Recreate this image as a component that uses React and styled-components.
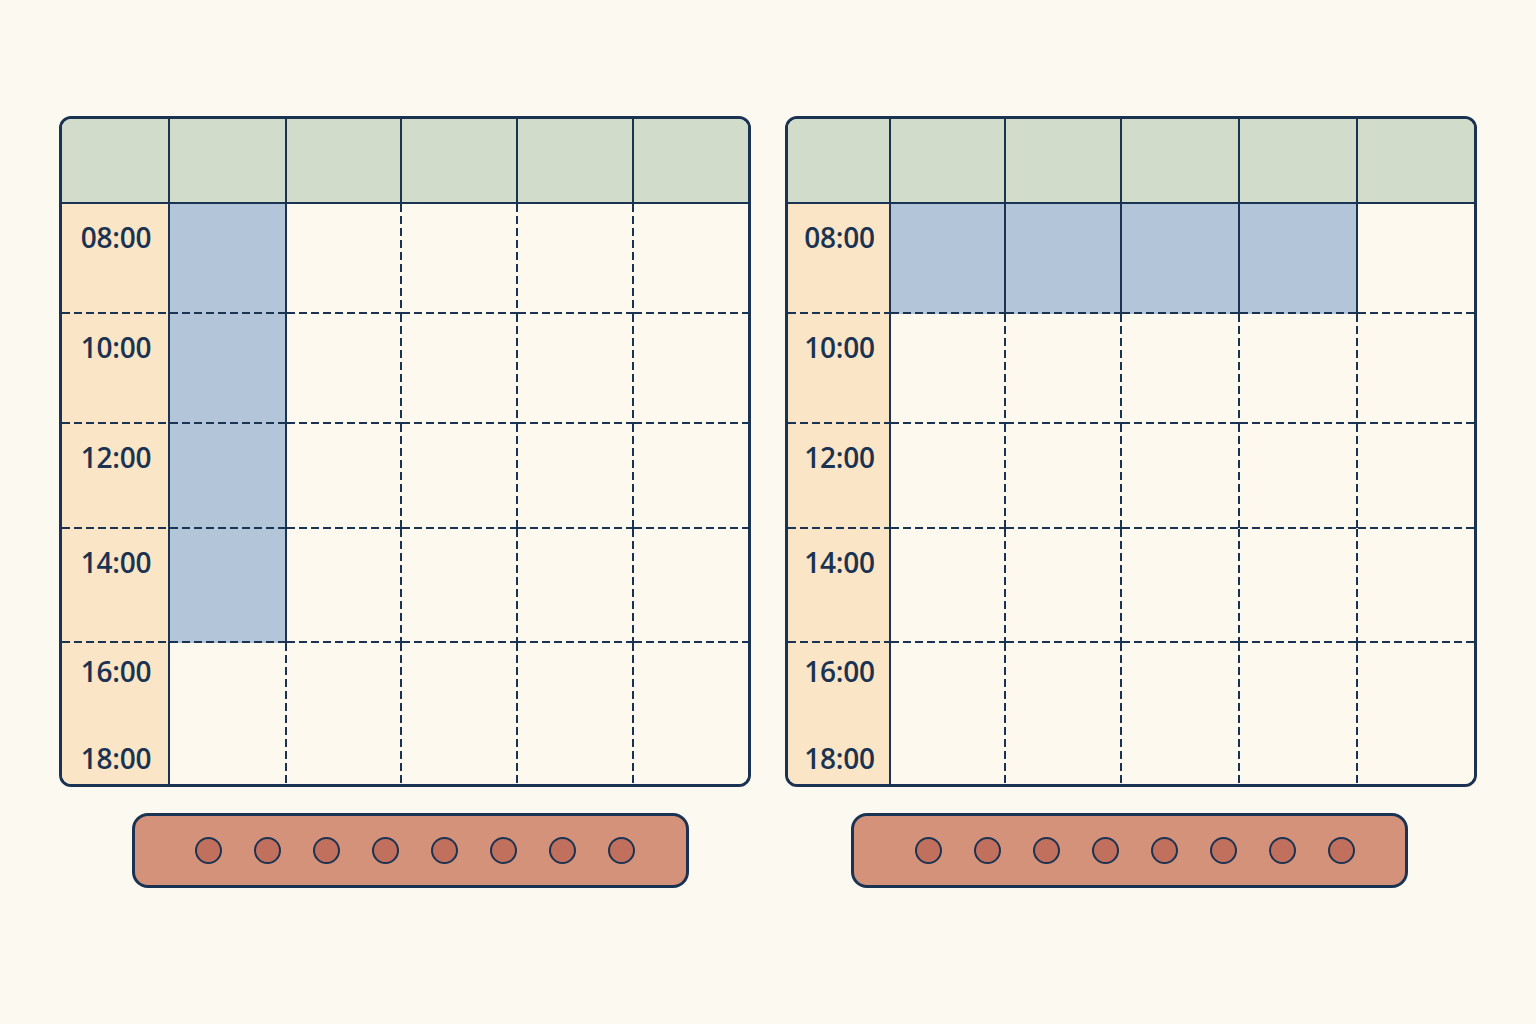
import React from "react";
import styled, { createGlobalStyle } from "styled-components";

const ink = "#1b3352";

const GlobalStyle = createGlobalStyle`
  html, body {
    margin: 0;
    padding: 0;
    background: #fcf9f1;
    font-family: "Open Sans", "Liberation Sans", sans-serif;
  }
`;

const Page = styled.div`
  display: flex;
  justify-content: center;
  align-items: flex-start;
  gap: 34px;
  padding-top: 116px;
  min-height: 1024px;
  box-sizing: border-box;
`;

const Panel = styled.div`
  display: flex;
  flex-direction: column;
  align-items: center;
  gap: 26px;
`;

const Board = styled.div`
  display: grid;
  grid-template-columns: ${(p) => p.$cols};
  grid-template-rows: 85px 110px 110px 105px 114px 141px;
  width: 692px;
  height: 671px;
  box-sizing: border-box;
  border: 3px solid ${ink};
  border-radius: 12px;
  overflow: hidden;
  background: #fdf9ef;
`;

const line = (side, kind) => {
  if (!kind) return null;
  if (side === "right") {
    return kind === "solid"
      ? `linear-gradient(${ink}, ${ink}) right top / 2px 100% no-repeat`
      : `repeating-linear-gradient(to bottom, ${ink} 0 8px, transparent 8px 12px) right top / 2px 100% no-repeat`;
  }
  return kind === "solid"
    ? `linear-gradient(${ink}, ${ink}) left bottom / 100% 2px no-repeat`
    : `repeating-linear-gradient(to right, ${ink} 0 8px, transparent 8px 12px) left bottom / 100% 2px no-repeat`;
};

const Cell = styled.div`
  box-sizing: border-box;
  background: ${(p) =>
    [line("right", p.$right), line("bottom", p.$bottom), p.$bg]
      .filter(Boolean)
      .join(", ")};
`;

const TimeCell = styled(Cell)`
  display: flex;
  flex-direction: column;
  align-items: center;
  justify-content: ${(p) => (p.$split ? "space-between" : "flex-start")};
  padding: ${(p) => (p.$split ? "12px 0 10px" : "17px 0 0")};
  color: ${ink};
  font-size: 28px;
  font-weight: 600;
  line-height: 32px;
  letter-spacing: -0.2px;
`;

const Strap = styled.div`
  display: flex;
  justify-content: center;
  align-items: center;
  gap: 32px;
  width: 557px;
  height: 75px;
  box-sizing: border-box;
  padding-left: 10px;
  margin-left: ${(p) => p.$shift * 2}px;
  border: 3px solid ${ink};
  border-radius: 16px;
  background: #d4927b;
`;

const Hole = styled.span`
  width: 27px;
  height: 27px;
  box-sizing: border-box;
  border: 2.5px solid ${ink};
  border-radius: 50%;
  background: #c0705d;
`;

const HEADER = "#d2dccb";
const TIME = "#fae6c6";
const BLUE = "#b3c5d9";
const BODY = "#fdf9ef";

const times = [["08:00"], ["10:00"], ["12:00"], ["14:00"], ["16:00", "18:00"]];

function Schedule({ cols, isBlue }) {
  const days = 5;
  const rows = times.length;
  const cells = [];

  // header row
  for (let c = 0; c <= days; c++) {
    cells.push(
      <Cell
        key={`h${c}`}
        $bg={HEADER}
        $right={c < days ? "solid" : null}
        $bottom="solid"
      />
    );
  }

  times.forEach((labels, r) => {
    const last = r === rows - 1;
    cells.push(
      <TimeCell
        key={`t${r}`}
        $bg={TIME}
        $right="solid"
        $bottom={last ? null : "dashed"}
        $split={labels.length > 1}
      >
        {labels.map((t) => (
          <span key={t}>{t}</span>
        ))}
      </TimeCell>
    );
    for (let c = 0; c < days; c++) {
      const blue = isBlue(r, c);
      const nextBlue = c < days - 1 && isBlue(r, c + 1);
      cells.push(
        <Cell
          key={`c${r}-${c}`}
          $bg={blue ? BLUE : BODY}
          $right={c < days - 1 ? (blue || nextBlue ? "solid" : "dashed") : null}
          $bottom={last ? null : "dashed"}
        />
      );
    }
  });

  return <Board $cols={cols}>{cells}</Board>;
}

function Buckle({ shift }) {
  return (
    <Strap $shift={shift}>
      {Array.from({ length: 8 }, (_, i) => (
        <Hole key={i} />
      ))}
    </Strap>
  );
}

export default function App() {
  return (
    <>
      <GlobalStyle />
      <Page>
        <Panel>
          <Schedule
            cols="108px 117px 115px 116px 116px 114px"
            isBlue={(r, c) => c === 0 && r < 4}
          />
          <Buckle shift={5} />
        </Panel>
        <Panel>
          <Schedule
            cols="103px 115px 116px 118px 118px 116px"
            isBlue={(r, c) => r === 0 && c < 4}
          />
          <Buckle shift={-1.5} />
        </Panel>
      </Page>
    </>
  );
}
